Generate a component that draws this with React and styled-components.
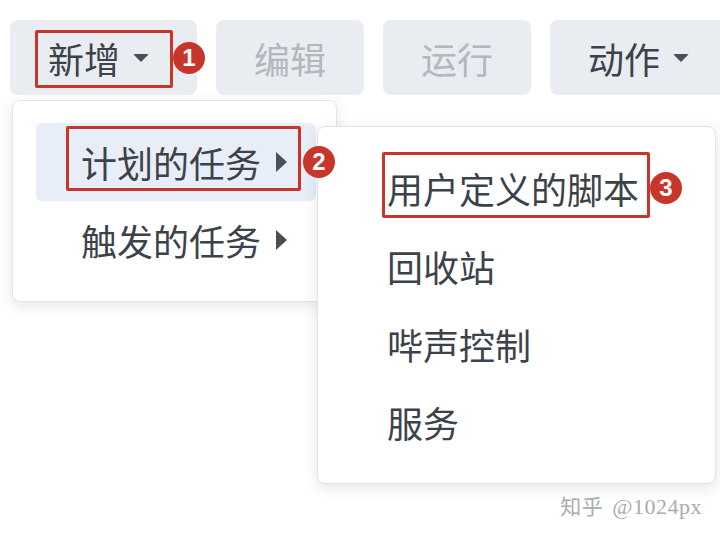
import React from 'react';
import styled, { createGlobalStyle } from 'styled-components';

const GlobalStyle = createGlobalStyle`
  html, body {
    margin: 0;
    padding: 0;
    background: #fff;
    overflow: hidden;
  }
  body {
    font-family: "Noto Sans CJK SC", "Noto Sans", sans-serif;
    color: #3d424a;
  }
`;

const Page = styled.div`
  position: relative;
  width: 720px;
  height: 539px;
  overflow: hidden;
`;

const Toolbar = styled.div`
  display: flex;
  gap: 19px;
  padding: 20px 0 0 10px;
`;

const Anchor = styled.div`
  position: relative;
  flex: none;
`;

const ToolButton = styled.div`
  flex: none;
  display: flex;
  align-items: center;
  height: 75px;
  padding: ${(p) => p.$pad || '0 38px'};
  box-sizing: border-box;
  background: #e9ecf1;
  border-radius: 8px;
  font-size: 36px;
  line-height: 1;
  color: ${(p) => (p.$disabled ? '#b3b7be' : '#3d424a')};
`;

const Caret = styled.span`
  display: inline-block;
  width: 0;
  height: 0;
  margin-left: 13px;
  border-left: 8px solid transparent;
  border-right: 8px solid transparent;
  border-top: 8px solid #4a4f57;
  border-radius: 2px;
`;

const Arrow = styled.span`
  display: inline-block;
  width: 0;
  height: 0;
  margin-left: 15px;
  border-top: 10px solid transparent;
  border-bottom: 10px solid transparent;
  border-left: 11px solid #4a4f57;
`;

// red annotation frame drawn over the content, does not change flow
const Marked = styled.span`
  position: relative;
  display: inline-flex;
  align-items: center;
  height: 36px;
  &::before {
    content: '';
    position: absolute;
    top: ${(p) => p.$box[0]}px;
    right: ${(p) => p.$box[1]}px;
    bottom: ${(p) => p.$box[2]}px;
    left: ${(p) => p.$box[3]}px;
    border: 3.5px solid #c8352b;
    border-radius: 2px;
    pointer-events: none;
  }
`;

const Badge = styled.span`
  position: absolute;
  top: 50%;
  left: calc(100% + ${(p) => p.$gap}px);
  transform: translateY(-50%);
  width: 32px;
  height: 32px;
  border-radius: 50%;
  background: #c8352b;
  color: #fff;
  font-family: "Liberation Sans", Arial, sans-serif;
  font-weight: 700;
  font-size: 24px;
  display: flex;
  align-items: center;
  justify-content: center;
  z-index: 3;
`;

const Menu = styled.div`
  position: absolute;
  top: ${(p) => p.$top};
  left: ${(p) => p.$left};
  width: ${(p) => p.$width}px;
  box-sizing: border-box;
  padding: 22px 20px 22px 23px;
  background: #fff;
  border: 1px solid #e1e4ea;
  border-radius: 8px;
  box-shadow: 0 4px 14px rgba(40, 50, 70, 0.12);
  z-index: ${(p) => p.$z || 1};
`;

const MenuItem = styled.div`
  position: relative;
  display: flex;
  align-items: center;
  height: 78px;
  padding-left: ${(p) => p.$indent || 45}px;
  border-radius: 6px;
  background: ${(p) => (p.$active ? '#e7eef8' : 'transparent')};
  font-size: 36px;
  line-height: 1;
  color: #3d424a;
`;

const Watermark = styled.div`
  position: absolute;
  right: 18px;
  bottom: 19px;
  font-family: "Liberation Serif", "Noto Sans CJK SC", serif;
  font-size: 22px;
  color: #a9acb1;
  letter-spacing: 0.5px;
  span {
    font-family: "Noto Sans CJK SC", sans-serif;
    font-size: 21px;
    margin-right: 9px;
  }
`;

const subItems = ['回收站', '哔声控制', '服务'];

export default function App() {
  return (
    <>
      <GlobalStyle />
      <Page>
        <Toolbar>
          <Anchor>
            <ToolButton $pad="0 48px 0 38px">
              <Marked $box={[-10, -24, -12, -13]}>
                新增
                <Caret />
                <Badge $gap={24}>1</Badge>
              </Marked>
            </ToolButton>
            <Menu $top="calc(100% + 5px)" $left="2px" $width={325}>
              <MenuItem $active>
                <Marked $box={[-18, -14, -11, -15]}>
                  计划的任务
                  <Arrow />
                  <Badge $gap={16}>2</Badge>
                </Marked>
                <Menu $top="3px" $left="calc(100% + 1px)" $width={399} $z={2}>
                  <MenuItem $indent={46}>
                    <Marked $box={[-18, -11, -12, -5]}>
                      用户定义的脚本
                      <Badge $gap={11}>3</Badge>
                    </Marked>
                  </MenuItem>
                  {subItems.map((label) => (
                    <MenuItem key={label} $indent={46}>
                      {label}
                    </MenuItem>
                  ))}
                </Menu>
              </MenuItem>
              <MenuItem>
                触发的任务
                <Arrow />
              </MenuItem>
            </Menu>
          </Anchor>
          <ToolButton $disabled>编辑</ToolButton>
          <ToolButton $disabled>运行</ToolButton>
          <ToolButton $pad="0 60px 0 38px">
            动作
            <Caret />
          </ToolButton>
        </Toolbar>
        <Watermark>
          <span>知乎</span>@1024px
        </Watermark>
      </Page>
    </>
  );
}
